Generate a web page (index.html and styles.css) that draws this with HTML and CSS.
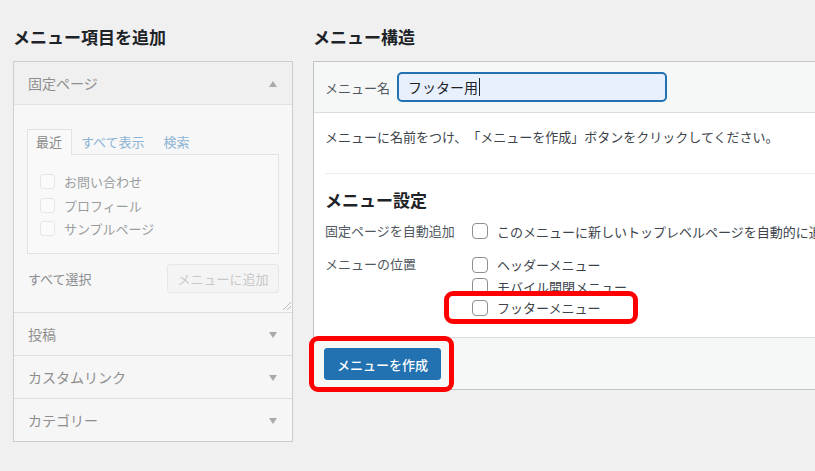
FILE: index.html
```html
<!DOCTYPE html>
<html lang="ja">
<head>
<meta charset="utf-8">
<title>メニュー</title>
<link rel="stylesheet" href="styles.css">
</head>
<body>
<div class="page">
  <div class="col-left">
    <h2 class="col-title">メニュー項目を追加</h2>
    <div class="accordion">
      <div class="acc-section open">
        <div class="acc-title"><span>固定ページ</span><i class="tri tri-up"></i></div>
        <div class="acc-content">
          <ul class="tabs">
            <li class="tab active">最近</li>
            <li class="tab">すべて表示</li>
            <li class="tab">検索</li>
          </ul>
          <div class="tab-panel">
            <div class="item"><span class="cb-faint"></span>お問い合わせ</div>
            <div class="item"><span class="cb-faint"></span>プロフィール</div>
            <div class="item"><span class="cb-faint"></span>サンプルページ</div>
          </div>
          <div class="acc-actions">
            <span class="select-all">すべて選択</span>
            <span class="btn-disabled">メニューに追加</span>
          </div>
          <svg class="grip" width="9" height="9" viewBox="0 0 9 9"><path d="M9 1 L1 9 M9 5 L5 9" stroke="#b8b8b8" stroke-width="1" fill="none"/></svg>
        </div>
      </div>
      <div class="acc-section">
        <div class="acc-title"><span>投稿</span><i class="tri tri-down"></i></div>
      </div>
      <div class="acc-section">
        <div class="acc-title"><span>カスタムリンク</span><i class="tri tri-down"></i></div>
      </div>
      <div class="acc-section">
        <div class="acc-title"><span>カテゴリー</span><i class="tri tri-down"></i></div>
      </div>
    </div>
  </div>

  <div class="col-right">
    <h2 class="col-title">メニュー構造</h2>
    <div class="menu-box">
      <div class="menu-header">
        <span class="name-label">メニュー名</span>
        <div class="name-input">フッター用<span class="caret"></span></div>
      </div>
      <div class="menu-body">
        <p class="intro">メニューに名前をつけ、「メニューを作成」ボタンをクリックしてください。</p>
        <div class="settings">
          <h3 class="settings-title">メニュー設定</h3>
          <div class="set-row row-auto">
            <div class="set-label">固定ページを自動追加</div>
            <div class="set-opts">
              <div class="opt"><span class="cb"></span>このメニューに新しいトップレベルページを自動的に追加</div>
            </div>
          </div>
          <div class="set-row row-loc">
            <div class="set-label">メニューの位置</div>
            <div class="set-opts">
              <div class="opt"><span class="cb"></span>ヘッダーメニュー</div>
              <div class="opt"><span class="cb"></span>モバイル開閉メニュー</div>
              <div class="opt"><span class="cb"></span>フッターメニュー</div>
            </div>
          </div>
        </div>
      </div>
      <div class="menu-footer">
        <button class="btn-primary" type="button">メニューを作成</button>
      </div>
    </div>
  </div>

  <div class="mark mark-footer-loc"></div>
  <div class="mark mark-create"></div>
</div>
</body>
</html>
```

FILE: styles.css
```css
* { box-sizing: border-box; }

html, body {
  margin: 0;
  padding: 0;
  background: #f0f0f1;
  overflow: hidden;
}

body {
  font-family: "Noto Sans CJK JP", "Noto Sans", sans-serif;
  font-size: 13px;
  color: #3c434a;
  width: 815px;
  height: 471px;
  text-spacing-trim: space-all;
}

.page {
  position: relative;
  display: flex;
  align-items: flex-start;
  gap: 20px;
  padding: 25px 0 0 13px;
  height: 471px;
}

.col-title {
  margin: 0 0 12px;
  font-size: 17px;
  line-height: 24px;
  font-weight: 700;
  color: #1d2327;
  white-space: nowrap;
}

/* ---------- left column ---------- */
.col-left {
  width: 280px;
  flex-shrink: 0;
}

.accordion {
  border: 1px solid #cdcdcd;
  background: #f6f6f6;
}

.acc-section + .acc-section {
  border-top: 1px solid #dedede;
}

.acc-title {
  height: 42px;
  display: flex;
  align-items: center;
  justify-content: space-between;
  padding: 0 15px 0 14px;
  font-size: 14px;
  color: #8e8e8e;
  background: #f6f6f6;
}

.open .acc-title {
  background: #f0f0f0;
}

.tri {
  width: 0;
  height: 0;
  border-left: 4px solid transparent;
  border-right: 4px solid transparent;
}
.tri-up { border-bottom: 6px solid #a9a9a9; margin-top: 1px; }
.tri-down { border-top: 6px solid #a9a9a9; margin-top: 2px; }

.acc-content {
  position: relative;
  border-top: 1px solid #e2e2e2;
  background: #f7f7f7;
  padding: 24px 13px 19px;
}

.tabs {
  list-style: none;
  margin: 0;
  padding: 0;
  display: flex;
  height: 25px;
}

.tab {
  padding: 0 9px;
  line-height: 25px;
  font-size: 13px;
  color: #8cb4d4;
  white-space: nowrap;
}

.tab.active {
  position: relative;
  z-index: 1;
  height: 26px;
  padding: 0 9px 0 8px;
  color: #8a8a8a;
  border: 1px solid #e3e3e3;
  border-bottom: none;
  background: #f9f9f9;
  line-height: 24px;
}

.tab:nth-child(3) { padding-left: 10px; }

.tab-panel {
  border: 1px solid #e3e3e3;
  background: #f9f9f9;
  padding: 15px 12px 12.5px;
}

.item {
  display: flex;
  align-items: center;
  height: 23.5px;
  color: #9b9ea0;
  white-space: nowrap;
}

.cb-faint {
  width: 15px;
  height: 15px;
  border: 1px solid #e6e6e6;
  border-radius: 3px;
  background: #fbfbfb;
  margin-right: 9px;
  flex-shrink: 0;
}

.acc-actions {
  margin-top: 10px;
  display: flex;
  align-items: center;
  justify-content: space-between;
  height: 29px;
}

.select-all {
  padding-left: 1px;
  color: #8b8d90;
}

.btn-disabled {
  width: 112px;
  height: 29px;
  display: flex;
  align-items: center;
  justify-content: center;
  border: 1px solid #e7e7e7;
  border-radius: 3px;
  background: #f4f4f4;
  color: #c8c8c8;
  white-space: nowrap;
}

.grip {
  position: absolute;
  right: 1px;
  bottom: 2px;
}

/* ---------- right column ---------- */
.col-right {
  width: 560px;
  flex-shrink: 0;
}

.menu-box {
  border: 1px solid #c3c4c7;
  background: #fff;
}

.menu-header {
  display: flex;
  align-items: center;
  gap: 7px;
  padding: 10px 11px;
  background: #f6f7f7;
  border-bottom: 1px solid #dcdcde;
}

.name-label {
  color: #50575e;
  white-space: nowrap;
  padding-top: 1px;
}

.name-input {
  width: 270px;
  height: 30px;
  border: 2px solid #2271b1;
  border-radius: 5px;
  background: #e8f0fe;
  padding: 0 9px;
  font-size: 14px;
  line-height: 26px;
  color: #1d2327;
  display: flex;
  align-items: center;
  white-space: nowrap;
}

.caret {
  display: inline-block;
  width: 1px;
  height: 18px;
  background: #1d2327;
  margin-left: 1px;
}

.menu-body {
  padding: 14px 11px 18.5px;
}

.intro {
  margin: 0 0 26px;
  line-height: 20px;
  white-space: nowrap;
}

.settings {
  border-top: 1px solid #ececec;
  padding-top: 14px;
}

.settings-title {
  margin: 0 0 8px;
  font-size: 17px;
  line-height: 24px;
  font-weight: 700;
  color: #1d2327;
}

.set-row {
  display: flex;
  align-items: flex-start;
}

.row-auto {
  height: 22px;
  align-items: center;
  margin-bottom: 12px;
}

.set-label {
  width: 147px;
  flex-shrink: 0;
  color: #50575e;
  white-space: nowrap;
  line-height: 18px;
}

.row-loc .set-label {
  padding-top: 1px;
}

.set-opts {
  white-space: nowrap;
}

.opt {
  display: flex;
  align-items: center;
  height: 21.5px;
  color: #3c434a;
  white-space: nowrap;
}

.row-auto .opt {
  height: 22px;
}

.cb {
  width: 16px;
  height: 16px;
  border: 1px solid #8c8f94;
  border-radius: 4px;
  background: #fff;
  margin-right: 9px;
  flex-shrink: 0;
}

.menu-footer {
  border-top: 1px solid #dcdcde;
  background: #f6f7f7;
  padding: 10px 10px 9px;
}

.btn-primary {
  display: block;
  width: 117px;
  height: 32px;
  padding: 0;
  border: 1px solid #2271b1;
  border-radius: 3px;
  background: #2271b1;
  color: #fff;
  font-family: inherit;
  font-size: 13px;
  font-weight: 500;
  white-space: nowrap;
}

/* ---------- red highlight marks ---------- */
.mark {
  position: absolute;
  border: 5px solid #ff0000;
  border-radius: 9px;
  pointer-events: none;
}

.mark-footer-loc {
  left: 444px;
  top: 291px;
  width: 194px;
  height: 33px;
}

.mark-create {
  left: 309px;
  top: 336px;
  width: 145px;
  height: 56px;
}
```
